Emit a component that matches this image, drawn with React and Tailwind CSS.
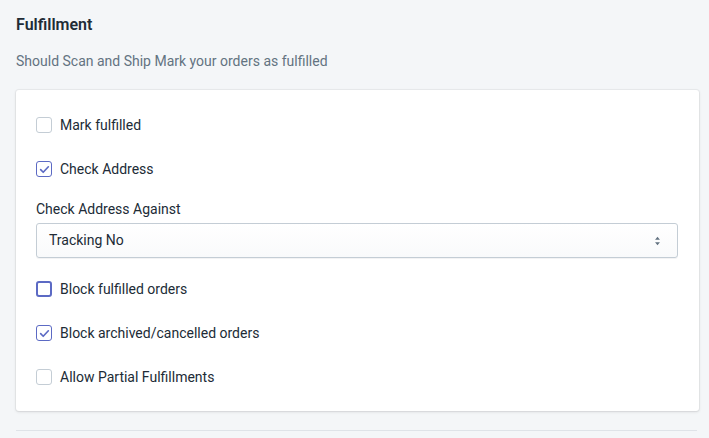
const options = [
  { label: 'Mark fulfilled', checked: false },
  { label: 'Check Address', checked: true },
];

const lower = [
  { label: 'Block fulfilled orders', checked: false, focused: true },
  { label: 'Block archived/cancelled orders', checked: true },
  { label: 'Allow Partial Fulfillments', checked: false },
];

function Checkbox({ label, checked, focused }) {
  return (
    <label className="flex items-center gap-2 h-5 text-[14px] text-[#212b36]">
      <span
        className={`flex items-center justify-center w-4 h-4 rounded-[3px] bg-white ${
          focused
            ? 'border-2 border-[#5c6ac4]'
            : checked
            ? 'border border-[#5c6ac4]'
            : 'border border-[#c4cdd5]'
        }`}
      >
        {checked && (
          <svg viewBox="0 0 12 12" className="w-[11px] h-[11px]" fill="none" stroke="#5c6ac4" strokeWidth="1.8" strokeLinecap="round" strokeLinejoin="round">
            <path d="M1.8 6.2l2.8 2.8L10.2 3" />
          </svg>
        )}
      </span>
      <span>{label}</span>
    </label>
  );
}

export default function App() {
  return (
    <div className="min-h-screen bg-[#f4f6f8] pl-4 pr-[10px] pt-[15px] font-[Roboto,sans-serif]">
      <h2 className="text-[16px] leading-5 font-semibold text-[#212b36]">Fulfillment</h2>
      <p className="mt-4 text-[14px] leading-5 text-[#637381]">Should Scan and Ship Mark your orders as fulfilled</p>

      <div className="mt-[19px] bg-white rounded-[3px] shadow-[0_0_0_1px_rgba(63,63,68,0.05),0_1px_3px_0_rgba(63,63,68,0.15)] pl-5 pr-[21px] pt-[25px] pb-[24px]">
        <div className="flex flex-col gap-6">
          {options.map((o) => (
            <Checkbox key={o.label} {...o} />
          ))}
        </div>

        <div className="mt-[20px]">
          <div className="text-[14px] leading-5 text-[#212b36]">Check Address Against</div>
          <div className="mt-1 flex items-center justify-between h-[35px] px-3 rounded-[3px] border border-[#c4cdd5] bg-gradient-to-b from-white to-[#f9fafb] shadow-[0_1px_0_0_rgba(22,29,37,0.05)]">
            <span className="text-[14px] text-[#212b36]">Tracking No</span>
            <svg viewBox="0 0 10 14" className="w-[7px] h-[10px] mr-1" fill="#637381">
              <path d="M5 1l3.5 4.2h-7z M5 13l3.5-4.2h-7z" />
            </svg>
          </div>
        </div>

        <div className="mt-[21px] flex flex-col gap-6">
          {lower.map((o) => (
            <Checkbox key={o.label} {...o} />
          ))}
        </div>
      </div>

      <div className="mt-[19px] border-t border-[#dfe3e8] mr-[2px]" />
    </div>
  );
}
